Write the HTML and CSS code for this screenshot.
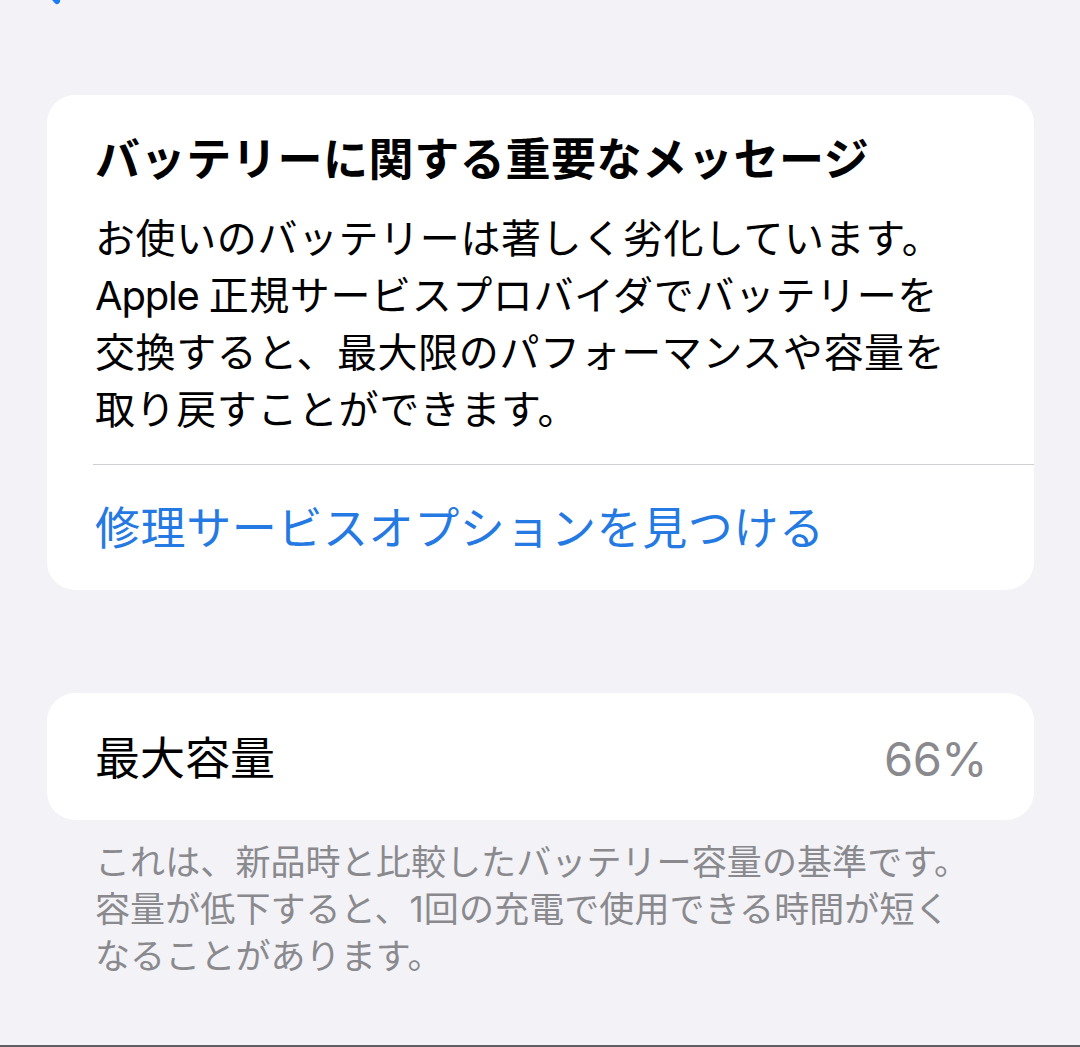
FILE: index.html
```html
<!DOCTYPE html>
<html lang="ja">
<head>
<meta charset="utf-8">
<title>バッテリーの状態</title>
<link rel="stylesheet" href="styles.css">
</head>
<body>
  <header class="nav">
    <svg class="back" width="30" height="50" viewBox="0 0 30 50" aria-hidden="true">
      <path d="M24 3 L5 24 L24 45" fill="none" stroke="#1a7cf5" stroke-width="6" stroke-linecap="round" stroke-linejoin="round"/>
    </svg>
  </header>
  <main class="content">
    <section class="card notice">
      <h1 class="notice-title">バッテリーに関する重要なメッセージ</h1>
      <p class="notice-body">お使いのバッテリーは著しく劣化しています。<br><span class="latin">Apple </span>正規サービスプロバイダでバッテリーを<br>交換すると、最大限のパフォーマンスや容量を<br>取り戻すことができます。</p>
      <div class="separator"></div>
      <a class="notice-link" href="#">修理サービスオプションを見つける</a>
    </section>

    <section class="card capacity">
      <span class="capacity-label">最大容量</span>
      <span class="capacity-value">66%</span>
    </section>
    <p class="footnote">これは、新品時と比較したバッテリー容量の基準です。<br>容量が低下すると、1回の充電で使用できる時間が短く<br>なることがあります。</p>
  </main>
</body>
</html>
```

FILE: styles.css
```css
html, body {
  margin: 0;
  padding: 0;
}
body {
  background: #f2f2f7;
  font-family: Inter, "Noto Sans CJK JP", sans-serif;
  color: #000;
  min-height: 100vh;
  box-sizing: border-box;
  border-bottom: 2px solid #5f5f63;
  overflow: hidden;
}
.nav {
  height: 50px;
  margin-top: -44px;
  display: flex;
  align-items: flex-start;
  padding-left: 33px;
}
.back {
  display: block;
}
.content {
  padding: 89px 46px 0 47px;
}
.card {
  background: #fff;
  border-radius: 28px;
}
.notice {
  padding: 35px 0 31px 0;
}
.notice-title {
  margin: 0 0 20px 48px;
  font-size: 45px;
  line-height: 60px;
  font-weight: 700;
  letter-spacing: 0.6px;
}
.notice-body {
  margin: 0 0 26px 48px;
  font-size: 40px;
  line-height: 57px;
  font-weight: 400;
  letter-spacing: 0.6px;
}
.latin {
  letter-spacing: -1.2px;
}
.separator {
  height: 1px;
  background: #cfcfd3;
  margin-left: 46px;
}
.notice-link {
  display: block;
  margin: 34px 0 0 48px;
  font-size: 45px;
  line-height: 60px;
  color: #2479e3;
  text-decoration: none;
  letter-spacing: 0.6px;
}
.capacity {
  margin-top: 103px;
  height: 127px;
  box-sizing: border-box;
  padding: 4px 47px 0 48px;
  display: flex;
  align-items: center;
  justify-content: space-between;
}
.capacity-label {
  font-size: 45px;
  line-height: 60px;
}
.capacity-value {
  font-size: 47px;
  line-height: 60px;
  color: #8a8a8e;
  letter-spacing: -0.5px;
}
.footnote {
  margin: 19px 0 0 48px;
  font-size: 35px;
  line-height: 47px;
  color: #8a8a8e;
  letter-spacing: 0.1px;
}
```
